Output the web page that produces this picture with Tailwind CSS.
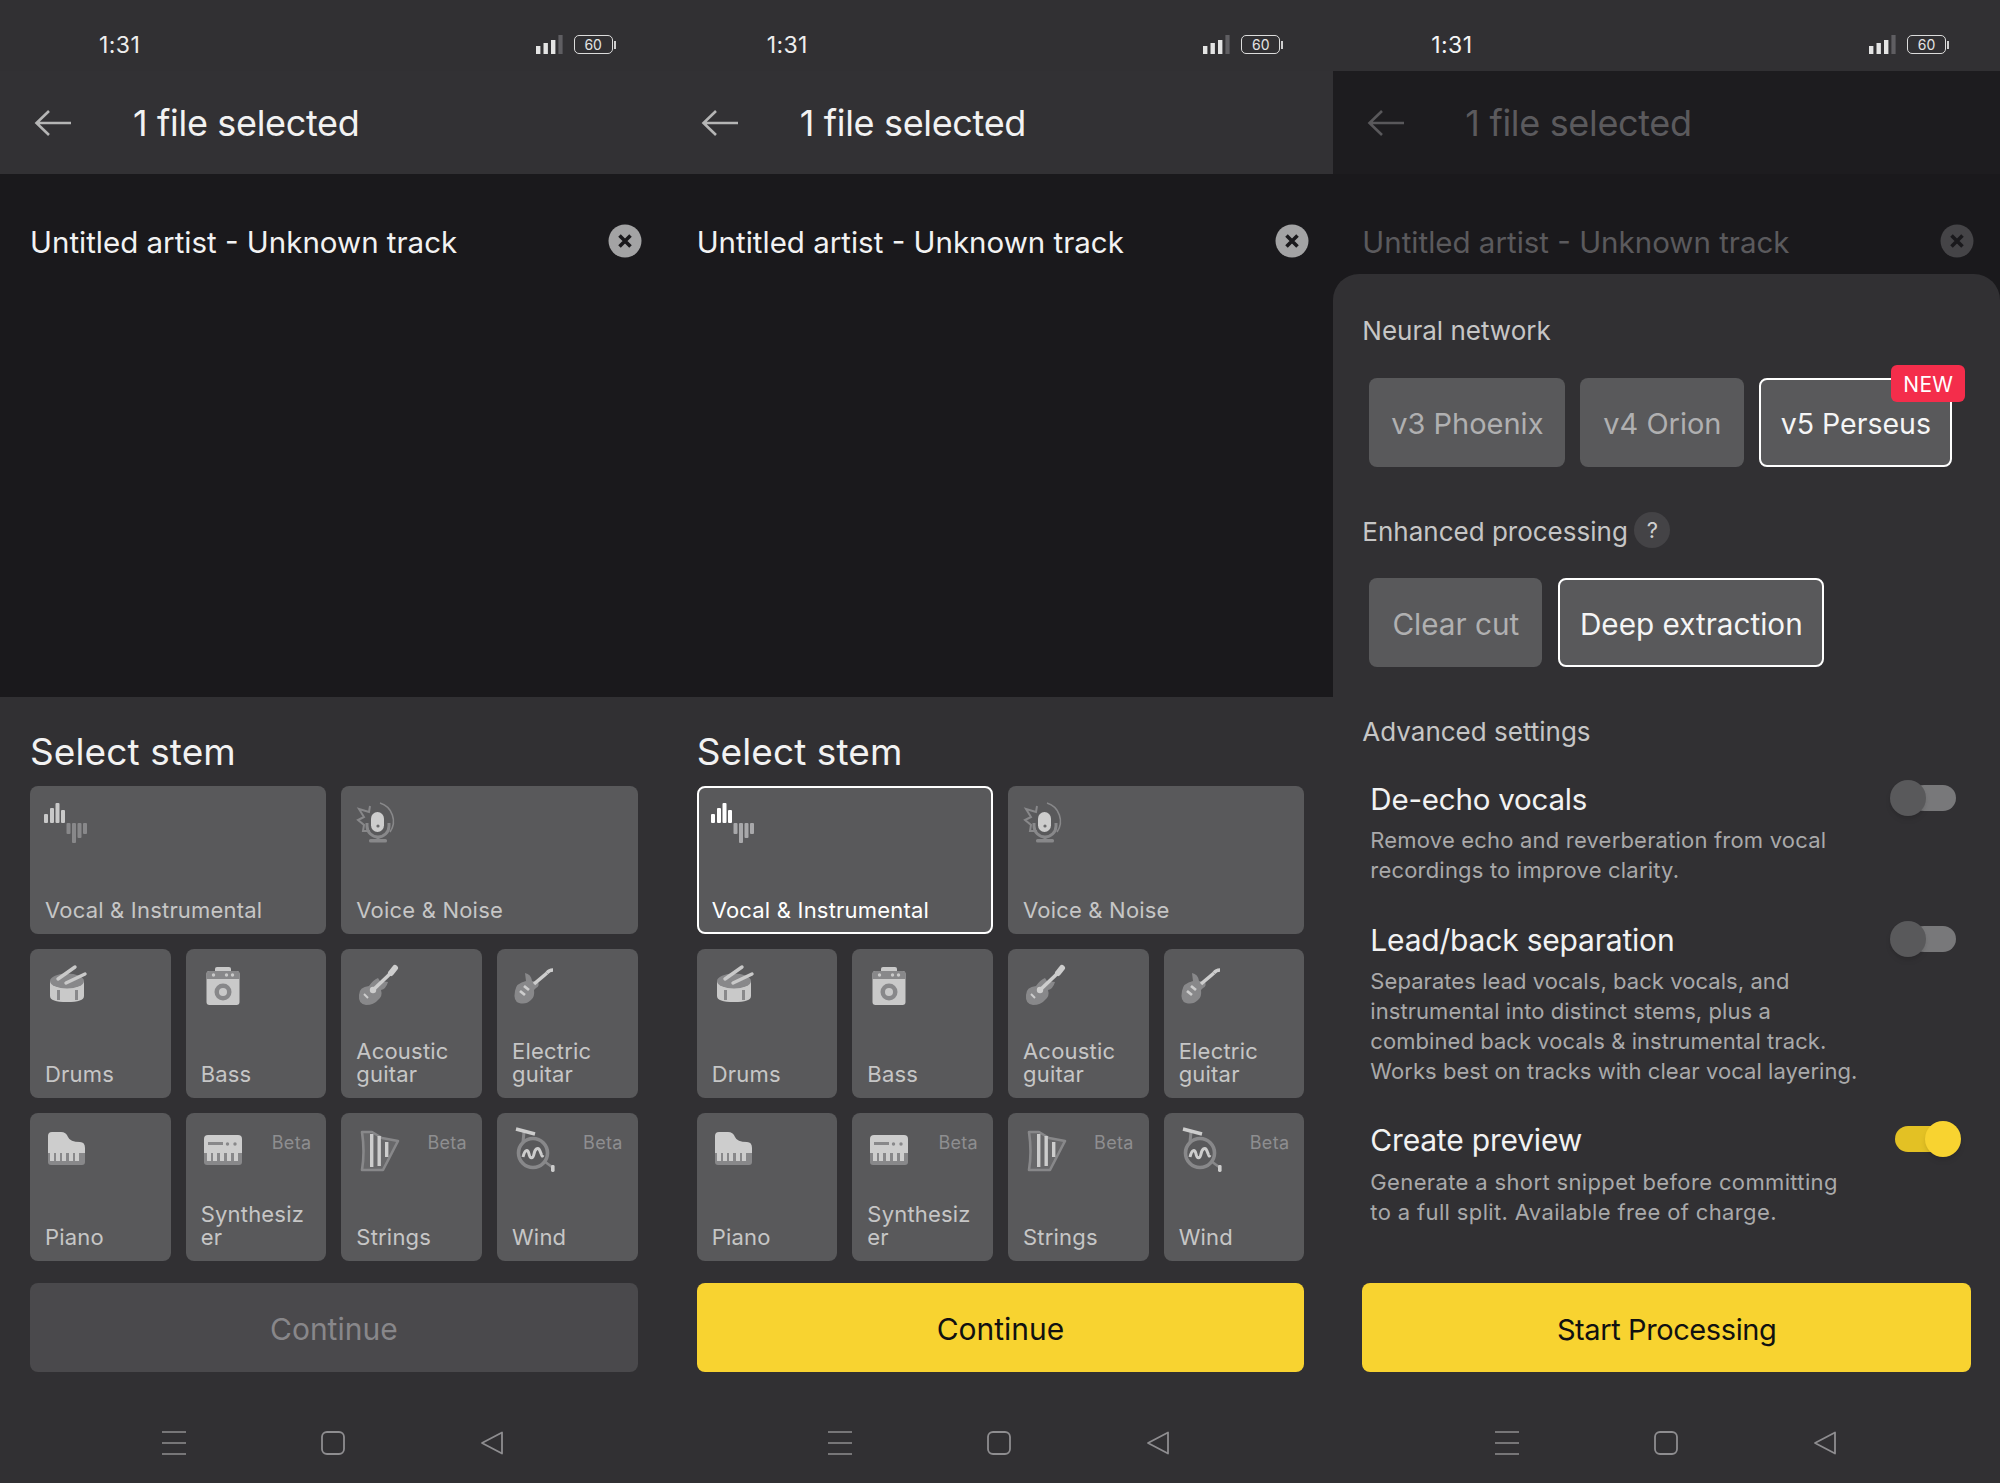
<!doctype html>
<html lang="en">
<head>
<meta charset="utf-8">
<title>Stem splitter</title>
<script src="https://cdn.jsdelivr.net/npm/@tailwindcss/browser@4"></script>
</head>
<body class="m-0 bg-[#313033] font-[Inter,sans-serif] antialiased">
<svg class="hidden" xmlns="http://www.w3.org/2000/svg">
  <symbol id="i-vocal" viewBox="0 0 48 48">
    <g fill="#c9c9c9"><rect x="2" y="17" width="4" height="9" rx="1"/><rect x="8" y="11" width="4" height="15" rx="1"/><rect x="13.5" y="6" width="4" height="20" rx="1"/><rect x="19" y="13" width="4" height="13" rx="1"/></g>
    <g fill="#88888a"><rect x="24.5" y="26" width="4" height="11" rx="1"/><rect x="30" y="26" width="4" height="20" rx="1"/><rect x="35.5" y="26" width="4" height="15" rx="1"/><rect x="41" y="26" width="4" height="11" rx="1"/></g>
  </symbol>
  <symbol id="i-voice" viewBox="0 0 48 48">
    <path d="M27 6A19 19 0 0 1 37 35" fill="none" stroke="#88888a" stroke-width="1.6"/>
    <path d="M17 9l-1 6-10-3 5 8-6 3 6 5-1 6 7 0" fill="none" stroke="#88888a" stroke-width="2"/>
    <path d="M14 26v3a11 11 0 0 0 22 0v-3" fill="none" stroke="#88888a" stroke-width="3"/>
    <rect x="23.5" y="39" width="3" height="4" fill="#88888a"/><rect x="16" y="42" width="18" height="3.5" rx="1.5" fill="#88888a"/>
    <rect x="18" y="15" width="13" height="20" rx="6.5" fill="#cdcdcd"/><circle cx="25" cy="29" r="1.6" fill="#6a6a6c"/>
  </symbol>
  <symbol id="i-drums" viewBox="0 0 48 48">
    <path d="M8 21v15q0 6 17 6t17-6V21z" fill="#c9c9c9"/>
    <ellipse cx="25" cy="21" rx="17" ry="7.5" fill="#88888a"/>
    <rect x="15" y="30" width="3" height="10" fill="#88888a"/><rect x="33" y="30" width="3" height="10" fill="#88888a"/>
    <path d="M16 19L33 7M24 23l19-9" stroke="#c9c9c9" stroke-width="3.4" stroke-linecap="round"/>
  </symbol>
  <symbol id="i-bass" viewBox="0 0 48 48">
    <rect x="17" y="7" width="16" height="6" rx="2" fill="#c9c9c9"/>
    <rect x="8.5" y="11" width="33" height="34" rx="3" fill="#c9c9c9"/>
    <path d="M8.5 19v-5q0-3 3-3h27q3 0 3 3v5z" fill="#88888a"/>
    <g fill="#c9c9c9"><circle cx="15.5" cy="15" r="1.7"/><circle cx="28.5" cy="15" r="1.7"/><circle cx="34.5" cy="15" r="1.7"/></g>
    <circle cx="25" cy="32" r="8.5" fill="#88888a"/><circle cx="25" cy="32" r="4" fill="#c9c9c9"/>
  </symbol>
  <symbol id="i-acoustic" viewBox="0 0 48 48">
    <path d="M16 26q4-6 9-8l2 3 8 1q-2 7-7 8 2 6-3 10-4 5-12 5-8-1-7-10 0-8 10-9z" fill="#88888a"/>
    <path d="M20 30L39 12" stroke="#cdcdcd" stroke-width="3.6"/><path d="M38 13l4-5" stroke="#cdcdcd" stroke-width="6" stroke-linecap="round"/>
    <circle cx="20" cy="30" r="3.2" fill="#cdcdcd"/><path d="M11 34l4 4" stroke="#cdcdcd" stroke-width="2"/>
  </symbol>
  <symbol id="i-electric" viewBox="0 0 48 48">
    <path d="M17 21l-1-8q6 1 7 8l6 1q2 4-2 6l-2 2q1 7-3 10-5 5-12 3-6-2-4-12 1-8 11-10z" fill="#88888a"/>
    <path d="M25 24L38 13" stroke="#cdcdcd" stroke-width="3.6"/><path d="M38 13q2-3 6-3" fill="none" stroke="#cdcdcd" stroke-width="3.4"/>
    <path d="M15 26l5 4M11 31l5 4" stroke="#cdcdcd" stroke-width="2.8"/>
  </symbol>
  <symbol id="i-piano" viewBox="0 0 48 48">
    <path d="M6 12q0-4 4-4h9q5 0 7 5t12 5q5 0 5 6v6H6z" fill="#cdcdcd"/>
    <path d="M6 29h37v9q0 3-3 3H9q-3 0-3-3z" fill="#88888a"/>
    <g fill="#cdcdcd"><rect x="8" y="29" width="4" height="8"/><rect x="14" y="29" width="4" height="8"/><rect x="20" y="29" width="4" height="8"/><rect x="27" y="29" width="4" height="8"/><rect x="33" y="29" width="4" height="8"/></g>
  </symbol>
  <symbol id="i-synth" viewBox="0 0 48 48">
    <path d="M6 15q0-4 4-4h30q4 0 4 4v15H6z" fill="#cdcdcd"/>
    <path d="M6 29h38v9q0 3-3 3H9q-3 0-3-3z" fill="#88888a"/>
    <g fill="#cdcdcd"><rect x="9" y="29" width="4" height="8"/><rect x="15" y="29" width="4" height="8"/><rect x="22" y="29" width="4" height="8"/><rect x="29" y="29" width="4" height="8"/><rect x="36" y="29" width="4" height="8"/></g>
    <rect x="10" y="18" width="15" height="3" fill="#88888a"/><circle cx="29.5" cy="20" r="1.7" fill="#88888a"/><circle cx="37" cy="20" r="1.7" fill="#88888a"/>
  </symbol>
  <symbol id="i-strings" viewBox="0 0 48 48">
    <path d="M9 8h10q5 3 10 6l16 3-15 29H9q3-18 0-38z" fill="#68686a" stroke="#88888a" stroke-width="2.6" stroke-linejoin="round"/>
    <g fill="#cdcdcd"><rect x="17" y="10" width="3.4" height="33"/><rect x="24.5" y="12" width="3.4" height="30"/><rect x="32" y="18" width="3.4" height="15"/></g>
  </symbol>
  <symbol id="i-wind" viewBox="0 0 48 48">
    <path d="M15 8l-1 10" stroke="#88888a" stroke-width="3" fill="none"/>
    <circle cx="24" cy="29" r="14.5" fill="none" stroke="#88888a" stroke-width="3.6"/>
    <path d="M35 37l8 6" stroke="#88888a" stroke-width="2.6"/>
    <path d="M7 5l19 5" stroke="#cdcdcd" stroke-width="3.4"/><rect x="42" y="41" width="3.6" height="7" rx="1.4" fill="#cdcdcd"/>
    <path d="M14 33c2-8 5-8 6-3s4 5 5 0 4-8 6-3 2 6 3 4" fill="none" stroke="#cdcdcd" stroke-width="3"/>
  </symbol>
  <symbol id="i-signal" viewBox="0 0 28 20">
    <g fill="#e4e4e4"><rect x="0" y="11" width="4.4" height="8"/><rect x="7.5" y="8" width="4.4" height="11"/><rect x="15" y="5" width="4.4" height="14"/></g><rect x="22.4" y="0" width="4.2" height="19" fill="#5f5e62"/>
  </symbol>
  <symbol id="i-menu" viewBox="0 0 24 24"><path d="M0 1h24M0 12h24M0 23h24" stroke="#8e8d90" stroke-width="1.6"/></symbol>
  <symbol id="i-home" viewBox="0 0 24 24"><rect x="1" y="1" width="22" height="22" rx="5" fill="none" stroke="#8e8d90" stroke-width="1.8"/></symbol>
  <symbol id="i-nav-back" viewBox="0 0 24 24"><path d="M22 1.5v21L2 12z" fill="none" stroke="#8e8d90" stroke-width="1.8" stroke-linejoin="round"/></symbol>
  <symbol id="i-arrow" viewBox="0 0 38 28"><path d="M37 14H3M15 2L2.5 14 15 26" fill="none" stroke="currentColor" stroke-width="2.6"/></symbol>
  <symbol id="i-close" viewBox="0 0 34 34"><circle cx="17" cy="17" r="16.5" fill="currentColor"/><path d="M11.5 11.5l11 11M22.5 11.5l-11 11" stroke="#1a191c" stroke-width="3.6"/></symbol>
</svg>

<main class="grid h-[1483px] w-[2000px] grid-cols-3 overflow-hidden">

  <!-- Panel 1 -->
  <section class="flex h-[1483px] flex-col">
    <div class="flex h-[71px] items-center justify-between pt-[18px] pr-[51px] pl-[99px] text-[23px] leading-none tracking-[0.4px] text-[#ededed]">
      <span class="pt-[2px]">1:31</span>
      <div class="flex items-center gap-[10px] tracking-normal">
        <svg class="h-[20px] w-[28px]"><use href="#i-signal"/></svg>
        <div class="flex items-center"><span class="flex h-[19px] w-[39px] items-center justify-center rounded-[5px] border-[1.5px] border-[#dcdcdc] text-[14px] text-[#e4e4e4]">60</span><span class="ml-px h-[8px] w-[2px] bg-[#cfcfcf]"></span></div>
      </div>
    </div>
    <header class="flex h-[103px] items-center bg-[#323134] pl-[34px]">
      <svg class="h-[28px] w-[38px] text-[#b5b5b5]"><use href="#i-arrow"/></svg>
      <h1 class="ml-[61px] text-[36px] leading-none font-normal tracking-[-0.33px] text-[#f2f2f2]">1 file selected</h1>
    </header>
    <div class="h-[523px] bg-[#1a191c] pt-[50px] pr-[29px] pl-[30px]">
      <div class="flex h-[34px] items-center justify-between text-[29.5px] text-[#f2f2f2]">
        <span class="pt-[2px]">Untitled artist - Unknown track</span>
        <svg class="mr-[-4px] h-[34px] w-[34px] text-[#a3a3a4]"><use href="#i-close"/></svg>
      </div>
    </div>
    <div class="flex flex-1 flex-col bg-[#313033] pt-[33px] pr-[29px] pl-[30px]">
      <h2 class="h-[56px] text-[37px] leading-[44px] font-normal tracking-[0.1px] text-[#f2f2f2]">Select stem</h2>
      <div class="grid grid-cols-4 gap-[15px] text-[22px] leading-[23px] tracking-[0.2px] text-[#c6c6c6]">
        <div class="col-span-2 flex h-[148.33px] flex-col justify-between rounded-[8px] bg-[#59595b] p-[15px] pb-[12px]"><svg class="-mt-[4px] -ml-[3px] h-[48px] w-[48px]"><use href="#i-vocal"/></svg><span>Vocal &amp; Instrumental</span></div>
        <div class="col-span-2 flex h-[148.33px] flex-col justify-between rounded-[8px] bg-[#59595b] p-[15px] pb-[12px]"><svg class="-mt-[4px] -ml-[3px] h-[48px] w-[48px]"><use href="#i-voice"/></svg><span>Voice &amp; Noise</span></div>
        <div class="flex h-[148.33px] flex-col justify-between rounded-[8px] bg-[#59595b] p-[15px] pb-[12px]"><svg class="-mt-[4px] -ml-[3px] h-[48px] w-[48px]"><use href="#i-drums"/></svg><span>Drums</span></div>
        <div class="flex h-[148.33px] flex-col justify-between rounded-[8px] bg-[#59595b] p-[15px] pb-[12px]"><svg class="-mt-[4px] -ml-[3px] h-[48px] w-[48px]"><use href="#i-bass"/></svg><span>Bass</span></div>
        <div class="flex h-[148.33px] flex-col justify-between rounded-[8px] bg-[#59595b] p-[15px] pb-[12px]"><svg class="-mt-[4px] -ml-[3px] h-[48px] w-[48px]"><use href="#i-acoustic"/></svg><span>Acoustic guitar</span></div>
        <div class="flex h-[148.33px] flex-col justify-between rounded-[8px] bg-[#59595b] p-[15px] pb-[12px]"><svg class="-mt-[4px] -ml-[3px] h-[48px] w-[48px]"><use href="#i-electric"/></svg><span>Electric guitar</span></div>
        <div class="flex h-[148.33px] flex-col justify-between rounded-[8px] bg-[#59595b] p-[15px] pb-[12px]"><svg class="-mt-[4px] -ml-[3px] h-[48px] w-[48px]"><use href="#i-piano"/></svg><span>Piano</span></div>
        <div class="relative flex h-[148.33px] flex-col justify-between rounded-[8px] bg-[#59595b] p-[15px] pb-[12px]"><svg class="-mt-[4px] -ml-[3px] h-[48px] w-[48px]"><use href="#i-synth"/></svg><span class="break-all">Synthesizer</span><span class="absolute top-[20px] right-[15px] text-[18px] leading-[20px] tracking-[0.3px] text-[#8e8e90]">Beta</span></div>
        <div class="relative flex h-[148.33px] flex-col justify-between rounded-[8px] bg-[#59595b] p-[15px] pb-[12px]"><svg class="-mt-[4px] -ml-[3px] h-[48px] w-[48px]"><use href="#i-strings"/></svg><span>Strings</span><span class="absolute top-[20px] right-[15px] text-[18px] leading-[20px] tracking-[0.3px] text-[#8e8e90]">Beta</span></div>
        <div class="relative flex h-[148.33px] flex-col justify-between rounded-[8px] bg-[#59595b] p-[15px] pb-[12px]"><svg class="-mt-[4px] -ml-[3px] h-[48px] w-[48px]"><use href="#i-wind"/></svg><span>Wind</span><span class="absolute top-[20px] right-[15px] text-[18px] leading-[20px] tracking-[0.3px] text-[#8e8e90]">Beta</span></div>
      </div>
      <button class="mt-[22px] h-[89px] rounded-[8px] bg-[#4a494c] pt-[5px] text-[30px] text-[#88878a]">Continue</button>
      <nav class="mt-[53px] flex h-[36px] items-center justify-center gap-[135px] pr-[2px]">
        <svg class="h-[24px] w-[24px]"><use href="#i-menu"/></svg><svg class="h-[24px] w-[24px]"><use href="#i-home"/></svg><svg class="h-[24px] w-[24px]"><use href="#i-nav-back"/></svg>
      </nav>
    </div>
  </section>

  <!-- Panel 2 -->
  <section class="flex h-[1483px] flex-col">
    <div class="flex h-[71px] items-center justify-between pt-[18px] pr-[50px] pl-[100px] text-[23px] leading-none tracking-[0.4px] text-[#ededed]">
      <span class="pt-[2px]">1:31</span>
      <div class="flex items-center gap-[10px] tracking-normal">
        <svg class="h-[20px] w-[28px]"><use href="#i-signal"/></svg>
        <div class="flex items-center"><span class="flex h-[19px] w-[39px] items-center justify-center rounded-[5px] border-[1.5px] border-[#dcdcdc] text-[14px] text-[#e4e4e4]">60</span><span class="ml-px h-[8px] w-[2px] bg-[#cfcfcf]"></span></div>
      </div>
    </div>
    <header class="flex h-[103px] items-center bg-[#323134] pl-[34px]">
      <svg class="h-[28px] w-[38px] text-[#b5b5b5]"><use href="#i-arrow"/></svg>
      <h1 class="ml-[61px] text-[36px] leading-none font-normal tracking-[-0.33px] text-[#f2f2f2]">1 file selected</h1>
    </header>
    <div class="h-[523px] bg-[#1a191c] pt-[50px] pr-[29px] pl-[30px]">
      <div class="flex h-[34px] items-center justify-between text-[29.5px] text-[#f2f2f2]">
        <span class="pt-[2px]">Untitled artist - Unknown track</span>
        <svg class="mr-[-5px] h-[34px] w-[34px] text-[#a3a3a4]"><use href="#i-close"/></svg>
      </div>
    </div>
    <div class="flex flex-1 flex-col bg-[#313033] pt-[33px] pr-[29px] pl-[30px]">
      <h2 class="h-[56px] text-[37px] leading-[44px] font-normal tracking-[0.1px] text-[#f2f2f2]">Select stem</h2>
      <div class="grid grid-cols-4 gap-[15px] text-[22px] leading-[23px] tracking-[0.2px] text-[#c6c6c6]">
        <div class="col-span-2 flex h-[148.33px] flex-col justify-between rounded-[8px] border-2 border-white bg-[#59595b] p-[13px] pb-[10px] text-white">
          <svg class="-mt-[4px] -ml-[3px] h-[48px] w-[48px]" viewBox="0 0 48 48">
            <g fill="#ffffff"><rect x="2" y="17" width="4" height="9" rx="1"/><rect x="8" y="11" width="4" height="15" rx="1"/><rect x="13.5" y="6" width="4" height="20" rx="1"/><rect x="19" y="13" width="4" height="13" rx="1"/></g>
            <g fill="#a8a8aa"><rect x="24.5" y="26" width="4" height="11" rx="1"/><rect x="30" y="26" width="4" height="20" rx="1"/><rect x="35.5" y="26" width="4" height="15" rx="1"/><rect x="41" y="26" width="4" height="11" rx="1"/></g>
          </svg>
          <span>Vocal &amp; Instrumental</span>
        </div>
        <div class="col-span-2 flex h-[148.33px] flex-col justify-between rounded-[8px] bg-[#59595b] p-[15px] pb-[12px]"><svg class="-mt-[4px] -ml-[3px] h-[48px] w-[48px]"><use href="#i-voice"/></svg><span>Voice &amp; Noise</span></div>
        <div class="flex h-[148.33px] flex-col justify-between rounded-[8px] bg-[#59595b] p-[15px] pb-[12px]"><svg class="-mt-[4px] -ml-[3px] h-[48px] w-[48px]"><use href="#i-drums"/></svg><span>Drums</span></div>
        <div class="flex h-[148.33px] flex-col justify-between rounded-[8px] bg-[#59595b] p-[15px] pb-[12px]"><svg class="-mt-[4px] -ml-[3px] h-[48px] w-[48px]"><use href="#i-bass"/></svg><span>Bass</span></div>
        <div class="flex h-[148.33px] flex-col justify-between rounded-[8px] bg-[#59595b] p-[15px] pb-[12px]"><svg class="-mt-[4px] -ml-[3px] h-[48px] w-[48px]"><use href="#i-acoustic"/></svg><span>Acoustic guitar</span></div>
        <div class="flex h-[148.33px] flex-col justify-between rounded-[8px] bg-[#59595b] p-[15px] pb-[12px]"><svg class="-mt-[4px] -ml-[3px] h-[48px] w-[48px]"><use href="#i-electric"/></svg><span>Electric guitar</span></div>
        <div class="flex h-[148.33px] flex-col justify-between rounded-[8px] bg-[#59595b] p-[15px] pb-[12px]"><svg class="-mt-[4px] -ml-[3px] h-[48px] w-[48px]"><use href="#i-piano"/></svg><span>Piano</span></div>
        <div class="relative flex h-[148.33px] flex-col justify-between rounded-[8px] bg-[#59595b] p-[15px] pb-[12px]"><svg class="-mt-[4px] -ml-[3px] h-[48px] w-[48px]"><use href="#i-synth"/></svg><span class="break-all">Synthesizer</span><span class="absolute top-[20px] right-[15px] text-[18px] leading-[20px] tracking-[0.3px] text-[#8e8e90]">Beta</span></div>
        <div class="relative flex h-[148.33px] flex-col justify-between rounded-[8px] bg-[#59595b] p-[15px] pb-[12px]"><svg class="-mt-[4px] -ml-[3px] h-[48px] w-[48px]"><use href="#i-strings"/></svg><span>Strings</span><span class="absolute top-[20px] right-[15px] text-[18px] leading-[20px] tracking-[0.3px] text-[#8e8e90]">Beta</span></div>
        <div class="relative flex h-[148.33px] flex-col justify-between rounded-[8px] bg-[#59595b] p-[15px] pb-[12px]"><svg class="-mt-[4px] -ml-[3px] h-[48px] w-[48px]"><use href="#i-wind"/></svg><span>Wind</span><span class="absolute top-[20px] right-[15px] text-[18px] leading-[20px] tracking-[0.3px] text-[#8e8e90]">Beta</span></div>
      </div>
      <button class="mt-[22px] h-[89px] rounded-[8px] bg-[#f8d330] pt-[5px] text-[30px] text-[#111111]">Continue</button>
      <nav class="mt-[53px] flex h-[36px] items-center justify-center gap-[135px] pr-[2px]">
        <svg class="h-[24px] w-[24px]"><use href="#i-menu"/></svg><svg class="h-[24px] w-[24px]"><use href="#i-home"/></svg><svg class="h-[24px] w-[24px]"><use href="#i-nav-back"/></svg>
      </nav>
    </div>
  </section>

  <!-- Panel 3 -->
  <section class="flex h-[1483px] flex-col bg-[#1a191c]">
    <div class="flex h-[71px] items-center justify-between bg-[#313033] pt-[18px] pr-[51px] pl-[98px] text-[23px] leading-none tracking-[0.4px] text-[#f5f5f5]">
      <span class="pt-[2px]">1:31</span>
      <div class="flex items-center gap-[10px] tracking-normal">
        <svg class="h-[20px] w-[28px]"><use href="#i-signal"/></svg>
        <div class="flex items-center"><span class="flex h-[19px] w-[39px] items-center justify-center rounded-[5px] border-[1.5px] border-[#dcdcdc] text-[14px] text-[#e4e4e4]">60</span><span class="ml-px h-[8px] w-[2px] bg-[#cfcfcf]"></span></div>
      </div>
    </div>
    <header class="flex h-[103px] items-center bg-[#1d1c1f] pl-[34px]">
      <svg class="h-[28px] w-[38px] text-[#59585b]"><use href="#i-arrow"/></svg>
      <h1 class="ml-[60px] text-[36px] leading-none font-normal tracking-[-0.33px] text-[#5b5a5d]">1 file selected</h1>
    </header>
    <div class="h-[100px] px-[29px] pt-[50px]">
      <div class="flex h-[34px] items-center justify-between text-[29.5px] text-[#5b5a5d]">
        <span class="pt-[2px]">Untitled artist - Unknown track</span>
        <svg class="mr-[-3px] h-[34px] w-[34px] text-[#454447]"><use href="#i-close"/></svg>
      </div>
    </div>
    <div class="flex flex-1 flex-col rounded-t-[26px] bg-[#313033] px-[29px] pt-[40px]">
      <h3 class="h-[32px] text-[26px] leading-[34px] font-normal text-[#c6c6c6]">Neural network</h3>
      <div class="mt-[32px] ml-[7px] flex gap-[15px] text-[29px]">
        <button class="h-[89px] w-[196px] rounded-[8px] bg-[#59595b] pt-[3px] text-[#b0b0b1]">v3 Phoenix</button>
        <button class="h-[89px] w-[164px] rounded-[8px] bg-[#59595b] pt-[3px] text-[#b0b0b1]">v4 Orion</button>
        <div class="relative">
          <button class="h-[89px] w-[193px] rounded-[8px] border-2 border-white bg-[#59595b] pt-[3px] text-[28.5px] text-[#f5f5f5]">v5 Perseus</button>
          <span class="absolute -top-[13px] -right-[13px] flex h-[37px] w-[74px] items-center justify-center rounded-[6px] bg-[#f42d4b] pt-[3px] text-[21px] tracking-[0.3px] text-white">NEW</span>
        </div>
      </div>
      <div class="mt-[47px] flex h-[32px] items-center gap-[6.5px]">
        <h3 class="pt-[2px] text-[26px] font-normal text-[#c6c6c6]">Enhanced processing</h3>
        <span class="flex h-[36px] w-[36px] items-center justify-center rounded-full bg-[#444346] text-[22px] text-[#d0d0d0]">?</span>
      </div>
      <div class="mt-[32px] ml-[7px] flex gap-[16px] text-[29.7px]">
        <button class="h-[89px] w-[173px] rounded-[8px] bg-[#59595b] pt-[4px] text-[#b0b0b1]">Clear cut</button>
        <button class="h-[89px] w-[266px] rounded-[8px] border-2 border-white bg-[#59595b] pt-[4px] text-[#f5f5f5]">Deep extraction</button>
      </div>
      <h3 class="mt-[48px] h-[32px] text-[26px] leading-[34px] font-normal text-[#c6c6c6]">Advanced settings</h3>

      <div class="mt-[31px] flex h-[40px] items-center justify-between pr-[15px] pl-[8px]">
        <span class="pt-[2px] text-[29.5px] tracking-[-0.2px] text-[#f2f2f2]">De-echo vocals</span>
        <span class="relative h-[36px] w-[66px]"><span class="absolute top-[5px] right-0 h-[26px] w-[45px] rounded-full bg-[#78787a]"></span><span class="absolute top-0 left-0 h-[36px] w-[36px] rounded-full bg-[#59595b] shadow-md"></span></span>
      </div>
      <p class="mt-[7px] pl-[8px] text-[22px] leading-[30px] tracking-[0.19px] text-[#a9a9aa]">Remove echo and reverberation from vocal<br>recordings to improve clarity.</p>

      <div class="mt-[34px] flex h-[40px] items-center justify-between pr-[15px] pl-[8px]">
        <span class="pt-[2px] text-[30px] tracking-[-0.2px] text-[#f2f2f2]">Lead/back separation</span>
        <span class="relative h-[36px] w-[66px]"><span class="absolute top-[5px] right-0 h-[26px] w-[45px] rounded-full bg-[#78787a]"></span><span class="absolute top-0 left-0 h-[36px] w-[36px] rounded-full bg-[#59595b] shadow-md"></span></span>
      </div>
      <p class="mt-[7px] pl-[8px] text-[22px] leading-[30px] tracking-[0.06px] text-[#a9a9aa]">Separates lead vocals, back vocals, and<br>instrumental into distinct stems, plus a<br>combined back vocals &amp; instrumental track.<br>Works best on tracks with clear vocal layering.</p>

      <div class="mt-[33px] flex h-[40px] items-center justify-between pr-[10px] pl-[8px]">
        <span class="pt-[2px] text-[30px] tracking-[-0.2px] text-[#f2f2f2]">Create preview</span>
        <span class="relative h-[36px] w-[66px]"><span class="absolute top-[5px] left-0 h-[26px] w-[50px] rounded-full bg-[#e3c124]"></span><span class="absolute top-0 right-0 h-[36px] w-[36px] rounded-full bg-[#f8d330] shadow-md"></span></span>
      </div>
      <p class="mt-[8px] pl-[8px] text-[22px] leading-[30px] tracking-[0.36px] text-[#a9a9aa]">Generate a short snippet before committing<br>to a full split. Available free of charge.</p>

      <button class="mt-[56px] h-[89px] rounded-[8px] bg-[#f8d330] pt-[5px] text-[29px] tracking-[-0.4px] text-[#111111]">Start Processing</button>
      <nav class="mt-[53px] flex h-[36px] items-center justify-center gap-[135px] pr-[2px]">
        <svg class="h-[24px] w-[24px]"><use href="#i-menu"/></svg><svg class="h-[24px] w-[24px]"><use href="#i-home"/></svg><svg class="h-[24px] w-[24px]"><use href="#i-nav-back"/></svg>
      </nav>
    </div>
  </section>
</main>
</body>
</html>
